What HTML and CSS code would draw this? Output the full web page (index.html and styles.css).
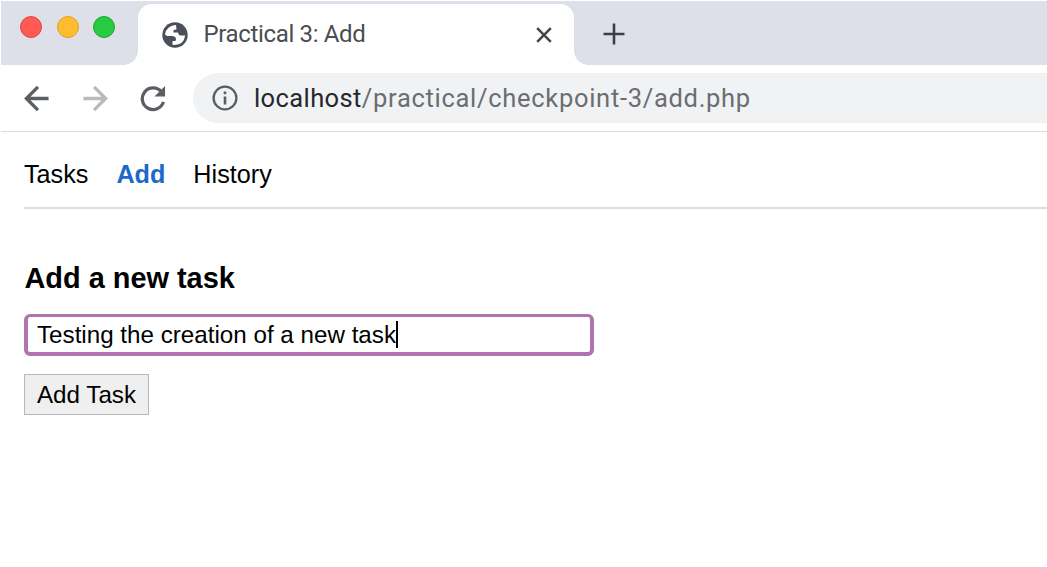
FILE: index.html
```html
<!DOCTYPE html>
<html lang="en">
<head>
<meta charset="utf-8">
<title>Practical 3: Add</title>
<link rel="stylesheet" href="styles.css">
</head>
<body>
<div class="browser">
  <header class="tabs">
    <div class="lights"><i class="light red"></i><i class="light yellow"></i><i class="light green"></i></div>
    <div class="tab">
      <svg class="globe" viewBox="0 0 26 26"><circle cx="13" cy="13" r="12.7" fill="#4b4f59"/><path d="M14 3 Q4.5 3.5 3 12.5 L5 14 H10.5 Q14 14.5 14 17 L13.5 19 H10.5 V22.8 Q21.5 24 23.2 13.5 H18.5 Q16.5 13 16 10.5 H11.5 V8 L14.5 7.5Z" fill="#fff"/></svg>
      <span class="tab-title">Practical 3: Add</span>
      <svg class="close" viewBox="0 0 16 16"><path d="M1.2 1.2 14.8 14.8M14.8 1.2 1.2 14.8" stroke="#44484d" stroke-width="2.6"/></svg>
    </div>
    <svg class="plus" viewBox="0 0 22 22"><path d="M11 .5V21.5M.5 11H21.5" stroke="#3c4045" stroke-width="2.6"/></svg>
  </header>
  <div class="toolbar">
    <svg class="nav-icon" viewBox="0 0 26 28"><path d="M25 14H2.5M14 2 2 14 14 26" fill="none" stroke="#5a5f64" stroke-width="3.4"/></svg>
    <svg class="nav-icon" viewBox="0 0 26 28"><path d="M1 14H23.5M12 2 24 14 12 26" fill="none" stroke="#b9babc" stroke-width="3.4"/></svg>
    <svg class="nav-icon" viewBox="0 0 26 28"><path d="M21.8 7.2A11.2 11.2 0 1 0 23.8 17.5" fill="none" stroke="#5a5f64" stroke-width="3.4"/><path d="M25.5 1V12H14.5Z" fill="#5a5f64"/></svg>
    <div class="address">
      <svg class="info" viewBox="0 0 26 26"><circle cx="13" cy="13" r="11.4" fill="none" stroke="#5a5d61" stroke-width="2.3"/><path d="M13 11.6V19.5M13 6.6V9.2" stroke="#5a5d61" stroke-width="2.6"/></svg>
      <span class="url"><b class="host">localhost</b>/practical/checkpoint-3/add.php</span>
    </div>
  </div>
  <main class="page">
    <nav class="menu"><a>Tasks</a><a class="active">Add</a><a>History</a></nav>
    <h1 class="heading">Add a new task</h1>
    <div class="field"><span class="field-text">Testing the creation of a new task</span><i class="caret"></i></div>
    <button class="submit">Add Task</button>
  </main>
</div>
</body>
</html>
```
FILE: styles.css
```css
* { box-sizing: border-box; }
body { margin: 0; background: #fff; overflow: hidden; }
svg { display: block; flex: none; }
.browser { width: 1047px; height: 567px; padding: 1px 0 0 1px; overflow: hidden; font-family: "Liberation Sans", Arial, sans-serif; color: #000; }
.tabs { display: flex; height: 64px; background: #dde0e8; }
.lights { display: flex; gap: 14.5px; width: 137px; padding: 15px 0 0 19px; flex: none; }
.light { width: 22px; height: 22px; border-radius: 50%; border: 1px solid; }
.red { background: #ff5b54; border-color: #e4453f; }
.yellow { background: #ffbc2d; border-color: #e0a022; }
.green { background: #28ca42; border-color: #18ab29; }
.tab { position: relative; display: flex; align-items: center; width: 436px; height: 61px; margin-top: 3px; padding: 0 22px 0 23.5px; background: #fff; border-radius: 14px 14px 0 0; flex: none; }
.tab::before, .tab::after { content: ""; position: absolute; bottom: 0; width: 14px; height: 14px; }
.tab::before { left: -14px; background: radial-gradient(circle at 0 0, transparent 13.5px, #fff 14px); }
.tab::after { right: -14px; background: radial-gradient(circle at 100% 0, transparent 13.5px, #fff 14px); }
.globe { width: 26px; height: 26px; }
.tab-title { margin: -2px 0 0 16px; flex: 1; font: 24px/30px Roboto, sans-serif; letter-spacing: -0.35px; color: #4a4d52; }
.close { width: 16px; height: 16px; }
.plus { width: 22px; height: 22px; margin: 22px 0 0 28.5px; }
.toolbar { display: flex; align-items: center; height: 67px; padding-left: 23px; gap: 32px; border-bottom: 1px solid #dadada; }
.nav-icon { width: 26px; height: 27px; }
.address { display: flex; align-items: center; flex: 1; height: 50px; margin-left: -5px; padding-left: 19px; background: #f1f2f4; border-radius: 25px 0 0 25px; }
.info { width: 26px; height: 26px; }
.url { margin: -1px 0 0 16px; font: 25.5px/32px Roboto, sans-serif; letter-spacing: 0.7px; color: #6b6d70; white-space: nowrap; }
.host { font-weight: 400; letter-spacing: 0.4px; color: #25272a; }
.page { padding-left: 23px; }
.menu { display: flex; gap: 28px; height: 77px; padding: 27px 0 0 0; border-bottom: 2px solid #ddd; font-size: 25.2px; line-height: 30px; }
.active { color: #1b69c9; font-weight: 700; }
.heading { margin: 52px 0 0 0.5px; font-size: 28.9px; line-height: 34px; font-weight: 700; }
.field { display: flex; align-items: center; width: 570px; height: 42px; margin-top: 19px; padding-left: 9px; border: 4px solid #b074b0; border-top-width: 3px; border-radius: 6px; font-size: 24.2px; }
.field-text { white-space: pre; }
.caret { width: 2px; height: 27px; background: #000; }
.submit { display: block; width: 125px; height: 41px; margin: 18px 0 0; padding: 0; border: 1.5px solid #b5b9b9; background: #efefef; font: 24.2px/36px "Liberation Sans", Arial, sans-serif; color: #000; }
```
